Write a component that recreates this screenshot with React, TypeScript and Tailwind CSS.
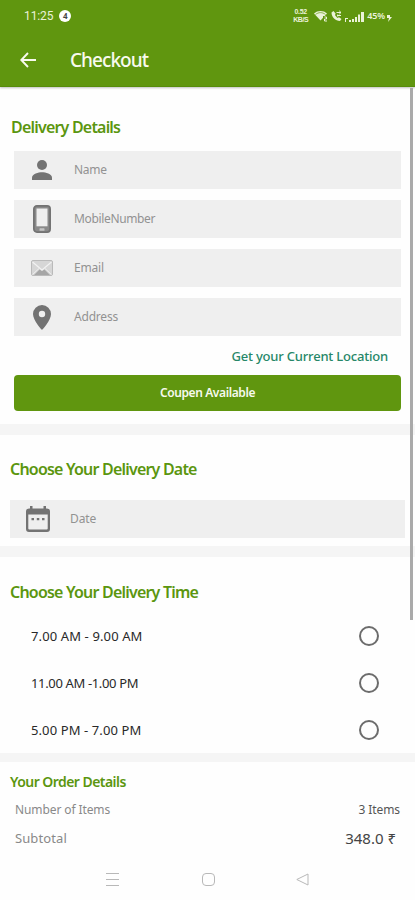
import { useState } from 'react';
import type { ReactNode } from 'react';

interface FieldProps {
  label: string;
  icon: ReactNode;
  className?: string;
  labelClass: string;
}

const SLOTS = [
  { label: '7.00 AM - 9.00 AM', tracking: 'tracking-[0.12px]' },
  { label: '11.00 AM -1.00 PM', tracking: 'tracking-[-0.35px]' },
  { label: '5.00 PM - 7.00 PM', tracking: 'tracking-[0.1px]' },
];

function Field({ label, icon, className = '', labelClass }: FieldProps) {
  return (
    <div className={`flex items-center h-[38px] bg-[#efefef] ${className}`}>
      <div className="flex items-center justify-center w-[56px] shrink-0 text-[#737373]">{icon}</div>
      <span className={`ml-1 text-[12px] leading-4 text-[#929292] ${labelClass}`}>{label}</span>
    </div>
  );
}

function PersonIcon() {
  return (
    <svg width="20" height="20" viewBox="0 0 20 20" fill="currentColor">
      <circle cx="10" cy="5" r="5" />
      <path d="M0 20v-2.500C0 14 6.500 12.200 10 12.200s10 1.800 10 5.300V20z" />
    </svg>
  );
}

function PhoneIcon() {
  return (
    <svg width="18" height="28" viewBox="0 0 18 28">
      <rect x=".9" y=".9" width="16.200" height="26.200" rx="3" fill="#8a8a8a" stroke="currentColor" strokeWidth="1.800" />
      <path d="M3.500 3.500h11v17.800h-11z" fill="#efefef" />
      <rect x="6.500" y="23.200" width="5" height="2.600" rx=".6" fill="#c4c4c4" />
    </svg>
  );
}

function MailIcon() {
  return (
    <svg width="22" height="16" viewBox="0 0 22 16">
      <rect x=".5" y=".5" width="21" height="15" rx="1.500" fill="#d6d6d6" stroke="#bababa" />
      <path d="M3 15l5.500-5.500L11 11l2.500-1.500L19 15z" fill="#a6a6a6" />
      <path d="M1.500 14.500l6.800-6.300M20.500 14.500l-6.800-6.300" fill="none" stroke="#eee" />
      <path d="M1.500 2l9.500 8 9.500-8" fill="none" stroke="#f2f2f2" strokeWidth="1.200" />
    </svg>
  );
}

function PinIcon() {
  return (
    <svg width="18" height="25" viewBox="0 0 18 25" fill="currentColor">
      <path fillRule="evenodd" d="M9 0a9 9 0 0 0-9 9c0 6.500 9 16 9 16s9-9.500 9-16a9 9 0 0 0-9-9zm0 5.800a3.200 3.200 0 1 1 0 6.400 3.200 3.200 0 0 1 0-6.400z" />
    </svg>
  );
}

function CalendarIcon() {
  return (
    <svg width="24" height="26" viewBox="0 0 24 26">
      <path
        fill="currentColor"
        fillRule="evenodd"
        d="M4 0h2.500v2.500h11V0H20v2.500h1A3 3 0 0 1 24 5.500V23a3 3 0 0 1-3 3H3a3 3 0 0 1-3-3V5.500a3 3 0 0 1 3-3h1zM2.300 8.500v14a1 1 0 0 0 1 1h17.400a1 1 0 0 0 1-1v-14z"
      />
      <path fill="currentColor" d="M5.500 12H8v2.300H5.500zM10.800 12h2.500v2.300h-2.500zM16 12h2.500v2.300H16z" />
    </svg>
  );
}

function StatusBar() {
  return (
    <div className="flex items-center justify-between h-8 pl-6 pr-[23px] text-[#eaf2d8]">
      <div className="flex items-center">
        <span className="font-[Roboto] text-[12px] leading-4 tracking-[-0.1px]">11:25</span>
        <span className="flex items-center justify-center w-3 h-3 ml-[6px] rounded-full bg-white text-[8px] leading-none font-bold text-[#444]">
          4
        </span>
      </div>
      <div className="flex items-center">
        <div className="w-[15px] text-center font-['Liberation_Sans',sans-serif] text-[7px] leading-[8px] font-bold tracking-[-0.4px]">
          <div>0.52</div>
          <div>KB/S</div>
        </div>
        <svg className="ml-[6px]" width="14" height="12" viewBox="0 0 14 12">
          <path d="M0 3.500C3.500.2 9.500.2 13 3.500L6.500 10.500z" fill="currentColor" />
          <path d="M1.500 4.500c3-2.500 7-2.500 10 0" fill="none" stroke="#60960f" strokeWidth=".7" />
          <path d="M9 6h5v6H9z" fill="#60960f" />
          <path d="M10.500 7h2v2h-2v2h2.500" fill="none" stroke="currentColor" />
        </svg>
        <svg className="ml-[3px]" width="11" height="12" viewBox="0 0 11 12">
          <path d="M2.500 1L.5 2.500C.5 7 4.500 11 9 11l1.500-2-2.500-1.800-1.600.9-2.500-3 .8-1.400z" fill="currentColor" />
          <path d="M5.500 2.500H10M8.200.8L10 2.500 8.200 4.200M10 5.500H6M7.200 4.500L6 5.500l1.200 1" fill="none" stroke="currentColor" />
        </svg>
        <svg className="ml-[3px]" width="19" height="11" viewBox="0 0 19 11" fill="currentColor">
          <path d="M0 7h3v1H1v3H0zM4 9h2v2H4zM7 8h2v3H7zM10 6h2v5h-2zM13 3.500h2V11h-2zM16 1h3v10h-3z" />
        </svg>
        <span className="ml-[3px] text-[9px] leading-3 font-semibold tracking-[-0.1px]">45%</span>
        <svg className="ml-[2px] mt-1" width="5" height="7" viewBox="0 0 5 7">
          <path d="M0 0v3h2L1 7l4-5H3V0z" fill="currentColor" />
        </svg>
      </div>
    </div>
  );
}

export default function App() {
  const [slot, setSlot] = useState<number | null>(null);

  return (
    <div className="relative flex flex-col w-[415px] h-[900px] overflow-hidden bg-[#fefefe] font-['Noto_Sans',sans-serif] whitespace-nowrap">
      <header className="h-[87px] shrink-0 bg-[#60960f] border-b border-[#568c0b] shadow-[0_1px_2px_rgba(0,0,0,0.25)]">
        <StatusBar />
        <div className="flex items-center h-14 pl-5 text-[#f8faee]">
          <svg width="16" height="16" viewBox="0 0 16 16" fill="none" stroke="currentColor" strokeWidth="1.900">
            <path d="M16 8H1.500M8 1L1.300 8 8 15" />
          </svg>
          <h1 className="ml-[34px] text-[19px] leading-6 font-medium tracking-[-0.95px]">Checkout</h1>
        </div>
      </header>

      <section className="h-[337px] shrink-0 px-[14px] pt-[28px]">
        <h2 className="-ml-[3px] mb-[12px] text-[16px] leading-6 font-semibold tracking-[-0.8px] text-[#5b960f]">Delivery Details</h2>
        <div className="flex flex-col gap-[11px]">
          <Field label="Name" icon={<PersonIcon />} labelClass="tracking-[-0.3px]" />
          <Field label="MobileNumber" icon={<PhoneIcon />} labelClass="tracking-[-0.35px]" />
          <Field label="Email" icon={<MailIcon />} labelClass="tracking-[-0.2px]" />
          <Field label="Address" icon={<PinIcon />} labelClass="tracking-[-0.2px]" />
        </div>
        <div className="mt-[8px] mr-[13px] text-right text-[13px] leading-6 font-medium tracking-[-0.2px] text-[#268768]">
          Get your Current Location
        </div>
        <button className="block w-full h-9 mt-[7px] rounded-[4px] bg-[#60960f] text-[12px] leading-4 font-semibold tracking-[-0.4px] text-[#f7faed]">
          Coupen Available
        </button>
      </section>

      <div className="h-[11px] shrink-0 bg-[#f5f5f5]" />

      <section className="h-[111px] shrink-0 px-[10px] pt-[22px]">
        <h2 className="mb-[19px] text-[16px] leading-6 font-semibold tracking-[-0.8px] text-[#5b960f]">Choose Your Delivery Date</h2>
        <Field label="Date" icon={<CalendarIcon />} labelClass="tracking-[-0.1px]" />
      </section>

      <div className="h-[11px] shrink-0 bg-[#f5f5f5]" />

      <section className="h-[196px] shrink-0 pt-[23px]">
        <h2 className="pl-[10px] mb-[8px] text-[16px] leading-6 font-semibold tracking-[-0.8px] text-[#5b960f]">Choose Your Delivery Time</h2>
        {SLOTS.map((s, idx) => (
          <button
            key={s.label}
            onClick={() => setSlot(idx)}
            className="flex items-center justify-between w-full h-[47px] pl-[31px] pr-[36px] text-left"
          >
            <span className={`text-[13px] leading-4 text-[#292929] ${s.tracking}`}>{s.label}</span>
            <span className="flex items-center justify-center w-5 h-5 rounded-full border-2 border-[#6c6c6c]">
              {slot === idx && <span className="w-2.5 h-2.5 rounded-full bg-[#60960f]" />}
            </span>
          </button>
        ))}
      </section>

      <div className="h-[9px] shrink-0 bg-[#f5f5f5]" />

      <section className="h-[95px] shrink-0 pt-[10px]">
        <h2 className="pl-[10px] text-[14px] leading-5 font-semibold tracking-[-0.55px] text-[#5b960f]">Your Order Details</h2>
        <div className="flex items-center justify-between h-[36px] px-[15px] text-[12px] leading-4 tracking-[-0.1px]">
          <span className="text-[#898989]">Number of Items</span>
          <span className="text-[#555]">3 Items</span>
        </div>
        <div className="flex items-center justify-between h-[20px] pl-[15px] pr-[19px] text-[13px] leading-4">
          <span className="tracking-[0.1px] text-[#898989]">Subtotal</span>
          <span className="text-[15px] text-[#444]">348.0 ₹</span>
        </div>
      </section>

      <nav className="flex items-center h-[44px] shrink-0 pl-[106px] text-[#b8b8b8]">
        <svg width="13" height="14" viewBox="0 0 13 14" stroke="currentColor">
          <path d="M0 1.500h13M0 7.500h13M0 13.500h13" />
        </svg>
        <svg className="ml-[83px]" width="13" height="13" viewBox="0 0 13 13" fill="none" stroke="currentColor">
          <rect x=".5" y=".5" width="12" height="12" rx="3.500" />
        </svg>
        <svg className="ml-[81px]" width="13" height="13" viewBox="0 0 13 13" fill="none" stroke="currentColor" strokeLinejoin="round">
          <path d="M.8 6.500L12 1v11z" />
        </svg>
      </nav>

      <div className="absolute right-[2px] top-[88px] w-[3px] h-[532px] bg-[#aaaaaa]" />
    </div>
  );
}
